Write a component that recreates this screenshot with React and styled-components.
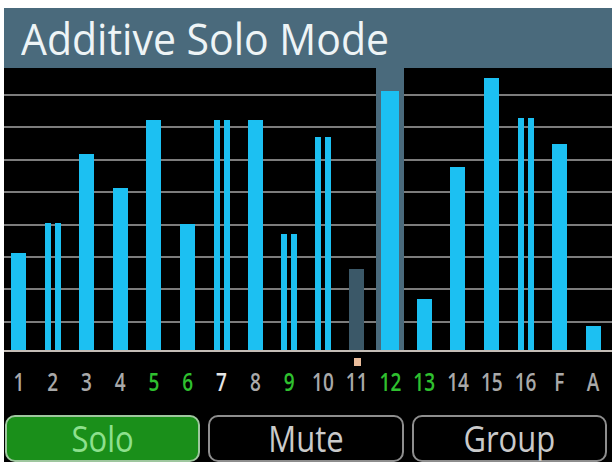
import React from "react"
import styled, { createGlobalStyle } from "styled-components"

const GlobalStyle = createGlobalStyle`
  html, body {
    margin: 0;
    padding: 0;
    background: #ffffff;
    overflow: hidden;
  }
  body {
    font-family: "Open Sans", "Noto Sans", sans-serif;
  }
`

const SLATE = "#4a6a7c"
const CYAN = "#1cc0f2"

const channels = [
  { label: "1", h: 97 },
  { label: "2", h: 127, double: true },
  { label: "3", h: 196 },
  { label: "4", h: 162 },
  { label: "5", h: 230, tone: "green" },
  { label: "6", h: 126, tone: "green" },
  { label: "7", h: 230, double: true, tone: "white" },
  { label: "8", h: 230 },
  { label: "9", h: 116, double: true, tone: "green" },
  { label: "10", h: 213, double: true },
  { label: "11", h: 81, muted: true, marker: true },
  { label: "12", h: 259, selected: true, tone: "green" },
  { label: "13", h: 51, tone: "green" },
  { label: "14", h: 183 },
  { label: "15", h: 272 },
  { label: "16", h: 232, double: true },
  { label: "F", h: 206 },
  { label: "A", h: 24 },
]

const toneColors = {
  green: "#2fc02f",
  white: "#e6e6e6",
  grey: "#a9a9a9",
}

const Screen = styled.div`
  margin: 8px 0 0 4px;
  width: 608px;
  height: 454px;
  background: #000;
  display: flex;
  flex-direction: column;
  overflow: hidden;
`

const Header = styled.div`
  height: 60px;
  flex: none;
  background: ${SLATE};
  display: flex;
  align-items: center;
  padding-left: 17px;
`

const Title = styled.h1`
  margin: 0;
  color: #eef4f6;
  font-size: 41px;
  font-weight: 400;
  line-height: 1;
  transform: scaleY(1.06);
`

const Chart = styled.div`
  height: 282px;
  flex: none;
  border-bottom: 2px solid #c4bdb6;
  background: repeating-linear-gradient(
    to bottom,
    transparent 0,
    transparent 26px,
    #7c7c7c 26px,
    #7c7c7c 28px,
    transparent 28px,
    transparent 32.4px
  );
`

const ChannelGrid = styled.div`
  display: grid;
  grid-template-columns: repeat(18, 1fr);
  margin-left: -2px;
  width: 608px;
  height: 100%;
`

const Column = styled.div`
  display: flex;
  justify-content: center;
  align-items: flex-end;
  height: 100%;
`

const Highlight = styled.div`
  width: 28px;
  height: 100%;
  background: ${SLATE};
  display: flex;
  justify-content: center;
  align-items: flex-end;
`

const BarPair = styled.div`
  display: flex;
  gap: 4px;
  align-items: flex-end;
`

const Bar = styled.div.attrs((p) => ({ style: { height: `${p.$h}px` } }))`
  width: ${(p) => (p.$thin ? 6 : p.$wide ? 18 : 15)}px;
  background: ${(p) => (p.$muted ? "#3b5868" : CYAN)};
`

const LabelRow = styled.div`
  height: 61px;
  flex: none;
  display: grid;
  grid-template-columns: repeat(18, 1fr);
  margin-left: -2px;
  width: 608px;
`

const LabelCell = styled.div`
  position: relative;
  display: flex;
  align-items: center;
  justify-content: center;
`

const LabelText = styled.span`
  color: ${(p) => toneColors[p.$tone || "grey"]};
  font-size: 19px;
  font-weight: 600;
  line-height: 1;
  transform: scaleY(1.3);
`

const Marker = styled.span`
  position: absolute;
  top: 6px;
  left: 50%;
  width: 7px;
  height: 8px;
  margin-left: -3px;
  background: #e9bc9a;
`

const ButtonRow = styled.div`
  display: grid;
  grid-template-columns: repeat(3, 1fr);
  gap: 8px;
  padding: 0 5px 0 1px;
  margin-top: 2px;
`

const ModeButton = styled.div`
  height: 47px;
  box-sizing: border-box;
  border: 2px solid ${(p) => (p.$active ? "#9fc79f" : "#8e8e8e")};
  border-radius: 10px;
  background: ${(p) => (p.$active ? "#1a8f1a" : "#000")};
  display: flex;
  align-items: center;
  justify-content: center;
`

const ButtonText = styled.span`
  color: ${(p) => (p.$active ? "#8ee08e" : "#cacaca")};
  font-size: 31px;
  font-weight: 500;
  line-height: 1;
  transform: scaleY(1.18);
`

const renderBars = (ch) => {
  if (ch.double) {
    return (
      <BarPair>
        <Bar $thin $h={ch.h} />
        <Bar $thin $h={ch.h} />
      </BarPair>
    )
  }
  if (ch.selected) {
    return (
      <Highlight>
        <Bar $wide $h={ch.h} />
      </Highlight>
    )
  }
  return <Bar $h={ch.h} $muted={ch.muted} />
}

const App = () => (
  <>
    <GlobalStyle />
    <Screen>
      <Header>
        <Title>Additive Solo Mode</Title>
      </Header>
      <Chart>
        <ChannelGrid>
          {channels.map((ch) => (
            <Column key={ch.label}>{renderBars(ch)}</Column>
          ))}
        </ChannelGrid>
      </Chart>
      <LabelRow>
        {channels.map((ch) => (
          <LabelCell key={ch.label}>
            {ch.marker && <Marker />}
            <LabelText $tone={ch.tone}>{ch.label}</LabelText>
          </LabelCell>
        ))}
      </LabelRow>
      <ButtonRow>
        <ModeButton $active>
          <ButtonText $active>Solo</ButtonText>
        </ModeButton>
        <ModeButton>
          <ButtonText>Mute</ButtonText>
        </ModeButton>
        <ModeButton>
          <ButtonText>Group</ButtonText>
        </ModeButton>
      </ButtonRow>
    </Screen>
  </>
)

export default App
